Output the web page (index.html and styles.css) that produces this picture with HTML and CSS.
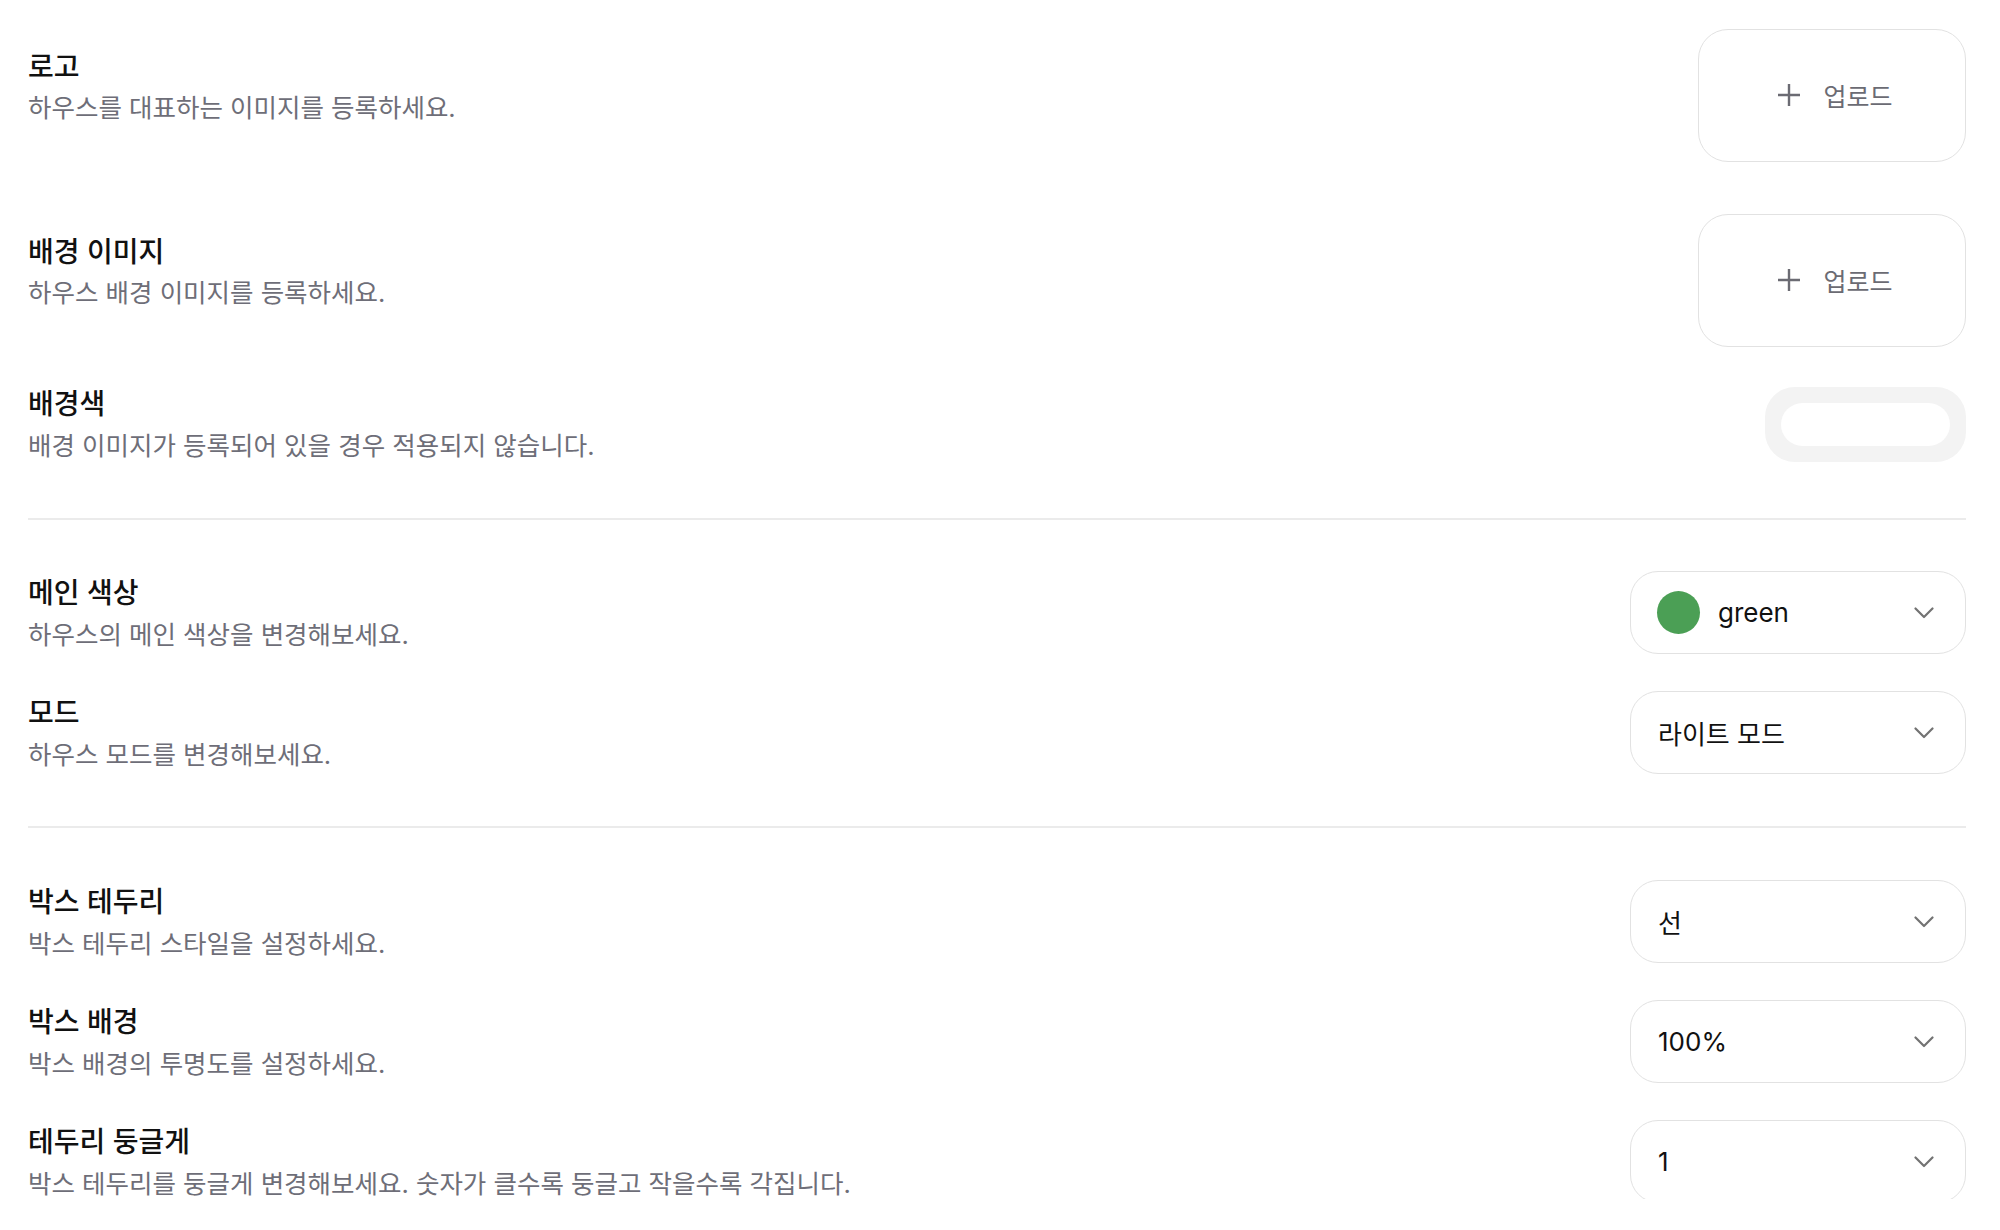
FILE: index.html
```html
<!DOCTYPE html>
<html lang="ko">
<head>
<meta charset="utf-8">
<title>하우스 설정</title>
<link rel="stylesheet" href="styles.css">
</head>
<body>
<main class="settings">
  <section class="group group--media">
    <div class="row row--upload">
      <div class="row-text">
        <h3 class="row-title">로고</h3>
        <p class="row-desc">하우스를 대표하는 이미지를 등록하세요.</p>
      </div>
      <button class="upload" type="button">
        <svg class="upload-icon" viewBox="0 0 24 24" aria-hidden="true"><path d="M12 1V23M1 12H23"/></svg>
        <span>업로드</span>
      </button>
    </div>
    <div class="row row--upload">
      <div class="row-text">
        <h3 class="row-title">배경 이미지</h3>
        <p class="row-desc">하우스 배경 이미지를 등록하세요.</p>
      </div>
      <button class="upload" type="button">
        <svg class="upload-icon" viewBox="0 0 24 24" aria-hidden="true"><path d="M12 1V23M1 12H23"/></svg>
        <span>업로드</span>
      </button>
    </div>
    <div class="row row--swatch">
      <div class="row-text">
        <h3 class="row-title">배경색</h3>
        <p class="row-desc">배경 이미지가 등록되어 있을 경우 적용되지 않습니다.</p>
      </div>
      <div class="swatch"><span class="swatch-color"></span></div>
    </div>
  </section>
  <hr class="divider">
  <section class="group group--theme">
    <div class="row">
      <div class="row-text">
        <h3 class="row-title">메인 색상</h3>
        <p class="row-desc">하우스의 메인 색상을 변경해보세요.</p>
      </div>
      <div class="select">
        <span class="select-value"><span class="dot dot--green"></span>green</span>
        <svg class="chevron" viewBox="0 0 20 12" aria-hidden="true"><path d="M1.5 1.5L10 10L18.5 1.5"/></svg>
      </div>
    </div>
    <div class="row">
      <div class="row-text">
        <h3 class="row-title">모드</h3>
        <p class="row-desc">하우스 모드를 변경해보세요.</p>
      </div>
      <div class="select">
        <span class="select-value">라이트 모드</span>
        <svg class="chevron" viewBox="0 0 20 12" aria-hidden="true"><path d="M1.5 1.5L10 10L18.5 1.5"/></svg>
      </div>
    </div>
  </section>
  <hr class="divider">
  <section class="group group--box">
    <div class="row">
      <div class="row-text">
        <h3 class="row-title">박스 테두리</h3>
        <p class="row-desc">박스 테두리 스타일을 설정하세요.</p>
      </div>
      <div class="select">
        <span class="select-value">선</span>
        <svg class="chevron" viewBox="0 0 20 12" aria-hidden="true"><path d="M1.5 1.5L10 10L18.5 1.5"/></svg>
      </div>
    </div>
    <div class="row">
      <div class="row-text">
        <h3 class="row-title">박스 배경</h3>
        <p class="row-desc">박스 배경의 투명도를 설정하세요.</p>
      </div>
      <div class="select">
        <span class="select-value">100%</span>
        <svg class="chevron" viewBox="0 0 20 12" aria-hidden="true"><path d="M1.5 1.5L10 10L18.5 1.5"/></svg>
      </div>
    </div>
    <div class="row">
      <div class="row-text">
        <h3 class="row-title">테두리 둥글게</h3>
        <p class="row-desc">박스 테두리를 둥글게 변경해보세요. 숫자가 클수록 둥글고 작을수록 각집니다.</p>
      </div>
      <div class="select">
        <span class="select-value">1</span>
        <svg class="chevron" viewBox="0 0 20 12" aria-hidden="true"><path d="M1.5 1.5L10 10L18.5 1.5"/></svg>
      </div>
    </div>
  </section>
</main>
</body>
</html>
```
FILE: styles.css
```css
* {
  box-sizing: border-box;
}

html, body {
  margin: 0;
  padding: 0;
  background: #ffffff;
}

body {
  font-family: "Inter", "Noto Sans CJK KR", "Noto Sans", sans-serif;
  color: #111111;
}

.settings {
  height: 1199px;
  overflow: hidden;
  padding: 0 34px 0 28px;
}

.group {
  display: flex;
  flex-direction: column;
  gap: 37px;
}

.group--media {
  padding: 29px 0 56px;
  gap: 52px;
}

.group--media .row--swatch {
  margin-top: -12px;
}

.group--theme {
  padding: 51px 0 52px;
}

.group--box {
  padding: 52px 0 0;
}

.divider {
  margin: 0;
  border: 0;
  height: 2px;
  background: #ebebeb;
}

.row {
  display: flex;
  align-items: center;
  justify-content: space-between;
  height: 83px;
  flex: none;
}

.row--upload {
  height: 133px;
}

.row--swatch {
  height: 75px;
}

.row-text {
  display: flex;
  flex-direction: column;
  gap: 6.5px;
  padding-bottom: 2px;
}

.row--upload .row-text {
  padding-bottom: 21px;
}

.row--swatch .row-text {
  padding-bottom: 4px;
}

.row-title {
  margin: 0;
  font-size: 28px;
  line-height: 40px;
  font-weight: 500;
  color: #111111;
}

.row-desc {
  margin: 0;
  font-size: 25.5px;
  line-height: 30px;
  font-weight: 400;
  color: #6e6e78;
  white-space: nowrap;
}

.upload {
  width: 268px;
  height: 133px;
  border: 1px solid #e2e2e2;
  border-radius: 30px;
  background: #ffffff;
  display: flex;
  align-items: center;
  justify-content: center;
  gap: 22px;
  padding: 0 0 2px 6px;
  font-family: inherit;
  font-size: 25px;
  color: #6b6b73;
  cursor: pointer;
}

.upload-icon {
  width: 24px;
  height: 24px;
  fill: none;
  stroke: #6b6b73;
  stroke-width: 2.4;
}

.swatch {
  width: 201px;
  height: 75px;
  padding: 16px;
  border-radius: 30px;
  background: #f3f3f3;
}

.swatch-color {
  display: block;
  height: 100%;
  border-radius: 22px;
  background: #ffffff;
}

.select {
  width: 336px;
  height: 83px;
  border: 1px solid #e2e2e2;
  border-radius: 28px;
  background: #ffffff;
  display: flex;
  align-items: center;
  justify-content: space-between;
  padding: 0 31px 0 26px;
}

.select-value {
  display: flex;
  align-items: center;
  gap: 18px;
  font-size: 26px;
  color: #111111;
  padding-left: 1px;
}

.dot {
  width: 43px;
  height: 43px;
  border-radius: 50%;
  margin-left: -1px;
}

.dot--green {
  background: #4b9f55;
}

.chevron {
  width: 20px;
  height: 12px;
  fill: none;
  stroke: #737373;
  stroke-width: 2.2;
  stroke-linecap: round;
  stroke-linejoin: round;
}
```
